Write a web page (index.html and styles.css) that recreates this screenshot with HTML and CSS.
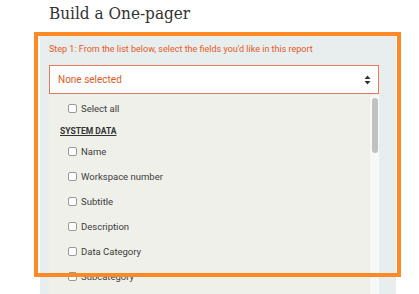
FILE: index.html
```html
<!DOCTYPE html>
<html lang="en">
<head>
    <meta charset="UTF-8">
    <title>Build a One-pager</title>
    <link rel="stylesheet" href="styles.css">
</head>
<body>
    <div class="page">
        <h1 class="title">Build a One-pager</h1>
        <div class="panel">
            <p class="step">Step 1: From the list below, select the fields you'd like in this report</p>
            <div class="select">
                <span>None selected</span>
                <svg class="caret" width="7" height="10" viewBox="0 0 7 10">
                    <path d="M3.5 0.5 L6.5 4 L0.5 4 Z M3.5 9.5 L6.5 6 L0.5 6 Z" fill="#333"/>
                </svg>
            </div>
            <div class="dropdown">
                <div class="options">
                    <label class="option"><span class="box"></span>Select all</label>
                    <div class="group">SYSTEM DATA</div>
                    <label class="option"><span class="box"></span>Name</label>
                    <label class="option"><span class="box"></span>Workspace number</label>
                    <label class="option"><span class="box"></span>Subtitle</label>
                    <label class="option"><span class="box"></span>Description</label>
                    <label class="option"><span class="box"></span>Data Category</label>
                    <label class="option"><span class="box"></span>Subcategory</label>
                </div>
                <div class="scrollbar"><div class="thumb"></div></div>
            </div>
        </div>
        <div class="highlight"></div>
    </div>
</body>
</html>
```

FILE: styles.css
```css
body {
    margin: 0;
    background-color: #fff;
    font-family: Roboto, Arial, sans-serif;
    overflow: hidden;
}

.page {
    position: relative;
    padding-left: 40px;
    height: 294px;
    overflow: hidden;
}

.title {
    margin: 0;
    padding: 3px 0 0 9px;
    height: 33px;
    box-sizing: border-box;
    font-family: "DejaVu Serif Condensed", "DejaVu Serif", serif;
    font-stretch: condensed;
    font-size: 17px;
    font-weight: normal;
    color: #333;
}

.panel {
    width: 356px;
    height: 261px;
    box-sizing: border-box;
    background-color: #e8eded;
    padding: 8px 17px 0 9px;
    overflow: hidden;
}

.step {
    margin: 0;
    font-size: 9px;
    line-height: 16px;
    color: #e65a26;
}

.select {
    margin-top: 8px;
    height: 29px;
    box-sizing: border-box;
    background-color: #fff;
    border: 1px solid #e8795a;
    display: flex;
    align-items: center;
    justify-content: space-between;
    padding: 0 7px 0 8px;
    font-size: 10px;
    color: #e65a26;
}

.dropdown {
    margin-top: 1px;
    display: flex;
    height: 220px;
}

.options {
    flex: 1;
    background-color: #f0f0eb;
    padding-top: 1px;
}

.option {
    display: flex;
    align-items: center;
    height: 25px;
    padding-left: 19px;
    font-size: 9.5px;
    color: #3c3c3c;
}

.box {
    width: 9px;
    height: 9px;
    box-sizing: border-box;
    border: 1px solid #999;
    border-radius: 2px;
    background-color: #fff;
    margin-right: 4px;
}

.group {
    height: 18px;
    padding-left: 11px;
    line-height: 21px;
    font-size: 8.5px;
    font-weight: bold;
    text-decoration: underline;
    color: #333;
}

.scrollbar {
    width: 10px;
    background-color: #f8f8f8;
    border-left: 1px solid #ececec;
    padding: 3px 0 0 2px;
    box-sizing: border-box;
}

.thumb {
    width: 6px;
    height: 55px;
    border-radius: 3px;
    background-color: #c1c1c1;
}

.highlight {
    position: absolute;
    left: 34px;
    top: 32px;
    width: 367px;
    height: 245px;
    box-sizing: border-box;
    border: 4px solid #ff8a25;
}
```
